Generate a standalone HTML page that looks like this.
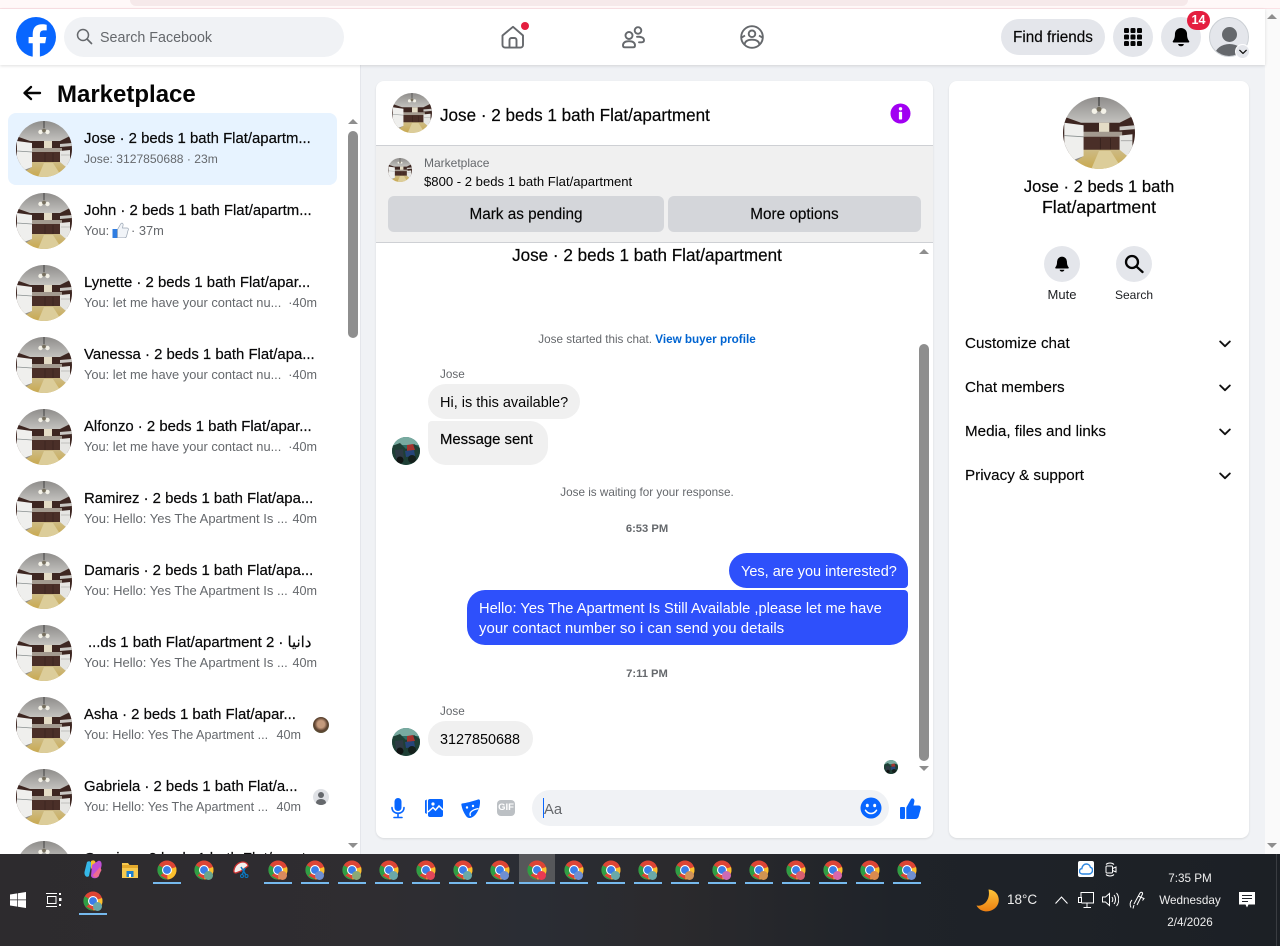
<!DOCTYPE html>
<html lang="en"><head><meta charset="utf-8"><title>Marketplace</title>
<style>
*{box-sizing:border-box}
html,body{margin:0;padding:0;width:1280px;height:946px;overflow:hidden;background:#f0f2f5;font-family:"Liberation Sans","Noto Sans CJK SC",sans-serif;color:#050505}
.a,.t,svg.i{position:absolute}
.t{white-space:nowrap;line-height:20px;margin-top:1px}
.n{font-size:14.9px;left:84px;color:#080809;-webkit-text-stroke:.2px #080809}
.s{font-size:12.85px;left:84px;color:#65686c}
.tm{font-size:12.6px;color:#65686c;text-align:right;right:963px}
.c{transform:translateX(-50%)}
.sys{font-size:11.7px;color:#65686c}
.b{position:absolute;background:#f0f0f0;border-radius:18px}
.m{font-size:14.5px}
.rw{font-size:15.2px;left:965px;-webkit-text-stroke:.15px #080809}
.ar{position:absolute;width:0;height:0;border-left:5px solid transparent;border-right:5px solid transparent}
.up{border-bottom:5px solid #8e8e8e}.dn{border-top:5px solid #8e8e8e}
.u{position:absolute;top:882px;height:2px;width:28px;background:#76b9ed}
.ct{position:absolute;top:860px;width:20px;height:20px}
.d{position:absolute;top:871px;width:9px;height:9px;border-radius:50%}
.tb{color:#eee;font-size:11.7px;line-height:16px;margin-top:1px}
.btn{position:absolute;top:196px;height:36px;background:#d4d6da;border-radius:6px;text-align:center;font-size:15.3px;line-height:37px;-webkit-text-stroke:.15px #050505}
</style></head><body>
<svg width="0" height="0" style="position:absolute">
<defs>
<clipPath id="cc"><circle cx="28" cy="28" r="28"/></clipPath>
<clipPath id="cj"><circle cx="14" cy="14" r="14"/></clipPath>
<linearGradient id="ceil" x1="0" y1="0" x2="0" y2="1"><stop offset="0" stop-color="#8f8d8b"/><stop offset=".6" stop-color="#b4b3b0"/><stop offset="1" stop-color="#cfcdc9"/></linearGradient>
<linearGradient id="flr" x1="0" y1="0" x2="0" y2="1"><stop offset="0" stop-color="#cdbb85"/><stop offset="1" stop-color="#c9a94f"/></linearGradient>
<symbol id="k" viewBox="0 0 56 56"><g clip-path="url(#cc)">
<rect width="56" height="24" fill="url(#ceil)"/>
<path d="M0 15L14 20H44L56 14V44H0Z" fill="#3d2621"/>
<rect x="28" y="20" width="8" height="8" fill="#e4dcc6"/>
<path d="M14 27H46V31H14Z" fill="#a39a8f"/>
<path d="M15 31H45V41H15Z" fill="#4a2f28"/>
<path d="M29 32V41M37 32V41" stroke="#2f1c18" stroke-width=".5"/>
<path d="M0 44L16 41H45L56 50V56H0Z" fill="url(#flr)"/>
<path d="M22 56L28 42H37L46 56Z" fill="#dccd9a"/>
<path d="M0 44L16 46L5 53L0 50Z" fill="#8f8d8b"/>
<path d="M1 20L16 22V46L8 49L1 45Z" fill="#efefed"/>
<path d="M1 30L16 31" stroke="#8a9090" stroke-width=".7"/>
<path d="M44 30L54 29V47L50 46L44 41Z" fill="#e6e6e3"/>
<path d="M45 34H54" stroke="#9a9a98" stroke-width=".6"/>
<path d="M44 23L56 22V25L44 26Z" fill="#c9c7c3"/>
<path d="M28 0V7" stroke="#3a3a3a" stroke-width=".9"/>
<circle cx="24.500" cy="11" r="2.200" fill="#f4f2e8"/><circle cx="31.500" cy="11" r="2.200" fill="#f4f2e8"/><circle cx="28" cy="9.500" r="1.900" fill="#77705f"/>
</g></symbol>
<symbol id="j" viewBox="0 0 28 28"><g clip-path="url(#cj)">
<rect width="28" height="28" fill="#2e6c63"/>
<rect width="28" height="8" fill="#78aaa0"/>
<path d="M0 9L8 6L14 12L22 7L28 11V28H0Z" fill="#1e3f35"/>
<path d="M15 8L21 7L23 13L15 14Z" fill="#a4332e"/>
<path d="M13 14L22 13L23 19L14 20Z" fill="#26457a"/>
<path d="M3 13L11 12L12 22L4 22Z" fill="#2e3a44"/>
<circle cx="8" cy="23" r="3.500" fill="#101413"/><circle cx="20" cy="22" r="4" fill="#14201c"/>
</g></symbol>
<symbol id="ch" viewBox="0 0 20 20">
<circle cx="10" cy="10" r="9.500" fill="#dd4535"/>
<path d="M10 10L3.400 15.500L10.500 19.500A9.500 9.500 0 0 1 1.700 5.300Z" fill="#2f9e44"/>
<path d="M10 10L19 7A9.500 9.500 0 0 1 10.500 19.500Z" fill="#fbc02d"/>
<circle cx="10" cy="10" r="5" fill="#fff"/><circle cx="10" cy="10" r="3.900" fill="#3b7de8"/>
</symbol>
<symbol id="bell" viewBox="0 0 24 24"><path d="M12 2.200a6.600 6.600 0 0 0-6.600 6.600c0 3.800-.8 5.800-2.200 7.500-.6.800-.1 1.700.8 1.700h16c.9 0 1.400-.9.800-1.700-1.400-1.700-2.200-3.700-2.200-7.500A6.600 6.600 0 0 0 12 2.200z" fill="#000"/><path d="M8.800 19.600a3.300 3.300 0 0 0 6.400 0z" fill="#000"/></symbol>
<symbol id="chev" viewBox="0 0 12 8"><path d="M1.200 1.500L6 6.200L10.800 1.500" fill="none" stroke="#111" stroke-width="1.900" stroke-linecap="round" stroke-linejoin="round"/></symbol>
</defs></svg>

<!-- top strip -->
<div class="a" style="left:0;top:0;width:1280px;height:9px;background:#fff8f8;border-bottom:1px solid #fbe1e5"></div>
<div class="a" style="left:130px;top:0;width:1058px;height:6px;background:#f6e9ea;border-radius:0 0 8px 8px"></div>
<!-- page scrollbar -->
<div class="a" style="left:1265px;top:9px;width:15px;height:845px;background:#fafafa"></div>
<div class="ar up" style="left:1267px;top:14px"></div>
<div class="ar dn" style="left:1267px;top:843px"></div>

<!-- sidebar -->
<div class="a" style="left:0;top:65px;width:361px;height:789px;background:#fff;border-right:1px solid #e4e6eb"></div>
<!-- nav -->
<div class="a" style="left:0;top:9px;width:1265px;height:56px;background:#fff;box-shadow:0 1px 3px rgba(0,0,0,.13)"></div>
<svg class="i" style="left:16px;top:17px" width="40" height="40" viewBox="0 0 40 40"><circle cx="20" cy="20" r="20" fill="#0866ff"/><path d="M16.700 40V26.200H12.600V20h4.100v-2.700c0-6.800 3.100-10 9.700-10 1.300 0 3.400.3 4.300.5v5.600c-.5-.05-1.300-.08-2.300-.08-3.200 0-4.500 1.200-4.500 4.400V20h6.400l-1.100 6.200h-5.300V40z" fill="#fff"/></svg>
<div class="a" style="left:64px;top:17px;width:280px;height:40px;background:#f0f2f5;border-radius:20px"></div>
<svg class="i" style="left:76px;top:28px" width="17" height="17" viewBox="0 0 17 17"><circle cx="7" cy="7" r="5.500" fill="none" stroke="#65686c" stroke-width="1.500"/><path d="M11 11L15.500 15.500" stroke="#65686c" stroke-width="1.700" stroke-linecap="round"/></svg>
<div class="t" style="left:100px;top:27px;font-size:14.300px;color:#65686c">Search Facebook</div>

<svg class="i" style="left:501px;top:25px" width="24" height="24" viewBox="0 0 24 24" fill="none" stroke="#65686c" stroke-width="1.900" stroke-linejoin="round"><path d="M1.500 10.500L12 1.800L22 10.500V20a2.600 2.600 0 0 1-2.600 2.600H4.100A2.600 2.600 0 0 1 1.500 20Z"/><path d="M8.500 22.500V15a2 2 0 0 1 2-2h3a2 2 0 0 1 2 2v7.500"/></svg>
<div class="a" style="left:521px;top:22px;width:8px;height:8px;border-radius:50%;background:#e41e3f"></div>
<svg class="i" style="left:621px;top:25px" width="24" height="24" viewBox="0 0 24 24" fill="none" stroke="#65686c" stroke-width="1.900" stroke-linecap="round"><circle cx="17" cy="5.500" r="3.300"/><circle cx="8" cy="10.500" r="3.500"/><path d="M2 20.500c0-3 2-4.300 6-4.300s6 1.300 6 4.300c0 1.200-.8 1.800-1.800 1.800H3.800C2.800 22.300 2 21.700 2 20.500Z"/><path d="M16 11.800c3.500-.3 7 .6 7 3.500 0 1.500-1 2-2.500 2H18"/></svg>
<svg class="i" style="left:740px;top:25px" width="24" height="24" viewBox="0 0 24 24" fill="none" stroke="#65686c" stroke-width="1.900"><circle cx="12" cy="12" r="10.800"/><circle cx="12" cy="8.800" r="3.300"/><path d="M4.500 20c.3-3.500 3-5.300 7.500-5.300s7.200 1.800 7.500 5.300"/><path d="M1.800 12.500L5 10.500M22.200 12.500L19 10.500"/></svg>

<div class="a" style="left:1001px;top:19px;width:104px;height:36px;border-radius:18px;background:#e4e6eb"></div>
<div class="t" style="left:1013px;top:27px;font-size:15.300px;-webkit-text-stroke:.15px #050505">Find friends</div>
<div class="a" style="left:1113px;top:17px;width:40px;height:40px;border-radius:50%;background:#e4e6eb"></div>
<svg class="i" style="left:1123px;top:27px" width="20" height="20" viewBox="0 0 20 20" fill="#050505"><rect x="1" y="1" width="5" height="5" rx="1.300"/><rect x="7.500" y="1" width="5" height="5" rx="1.300"/><rect x="14" y="1" width="5" height="5" rx="1.300"/><rect x="1" y="7.500" width="5" height="5" rx="1.300"/><rect x="7.500" y="7.500" width="5" height="5" rx="1.300"/><rect x="14" y="7.500" width="5" height="5" rx="1.300"/><rect x="1" y="14" width="5" height="5" rx="1.300"/><rect x="7.500" y="14" width="5" height="5" rx="1.300"/><rect x="14" y="14" width="5" height="5" rx="1.300"/></svg>
<div class="a" style="left:1161px;top:17px;width:40px;height:40px;border-radius:50%;background:#e4e6eb"></div>
<svg class="i" style="left:1170px;top:26px" width="22" height="22"><use href="#bell"/></svg>
<div class="a" style="left:1187px;top:11px;width:23px;height:19px;border-radius:10px;background:#e41e3f;color:#fff;font-size:12.500px;font-weight:700;text-align:center;line-height:19px">14</div>
<div class="a" style="left:1209px;top:17px;width:40px;height:40px;border-radius:50%;background:#e4e6eb;overflow:hidden;border:1px solid #ccd0d5"><div class="a" style="left:12px;top:9px;width:15px;height:15px;border-radius:50%;background:#65686c"></div><div class="a" style="left:5px;top:26px;width:29px;height:22px;border-radius:50%;background:#65686c"></div></div>
<div class="a" style="left:1235px;top:44px;width:15px;height:15px;border-radius:50%;background:#e4e6eb;border:1px solid #fff"></div>
<svg class="i" style="left:1239px;top:49px" width="8" height="6"><use href="#chev"/></svg>

<!-- sidebar content -->
<svg class="i" style="left:22px;top:84px" width="20" height="18" viewBox="0 0 20 18" fill="none" stroke="#050505" stroke-width="2.400" stroke-linecap="round" stroke-linejoin="round"><path d="M18 9H3M9 3L2.500 9L9 15"/></svg>
<div class="t" style="left:57px;top:81px;font-size:24px;line-height:26px;font-weight:700">Marketplace</div>
<div class="a" style="left:8px;top:113px;width:329px;height:72px;background:#e7f3ff;border-radius:8px"></div>
<div class="ar up" style="left:348px;top:119px"></div>
<div class="a" style="left:348px;top:131px;width:10px;height:207px;background:#8e8e8e;border-radius:5px"></div>
<div class="ar dn" style="left:348px;top:843px"></div>

<svg class="i" style="left:16px;top:121px" width="56" height="56"><use href="#k"/></svg>
<div class="t n" style="top:128px">Jose · 2 beds 1 bath Flat/apartm...</div>
<div class="t s" style="top:148px;font-size:12.100px">Jose: 3127850688 · 23m</div>

<svg class="i" style="left:16px;top:193px" width="56" height="56"><use href="#k"/></svg>
<div class="t n" style="top:200px">John · 2 beds 1 bath Flat/apartm...</div>
<div class="t s" style="top:220px">You:</div>
<svg class="i" style="left:112px;top:222px" width="17" height="16" viewBox="0 0 17 16"><rect x=".5" y="7" width="5" height="9" fill="#2f7de1"/><path d="M5.500 7.500L9 1.500c1.500-1 2.500.5 2 2L10.500 6H15c1.500 0 1.800 1.500 1 2.500L14.500 14.500c-.3 1-1 1.300-2 1.300H5.500Z" fill="#f1f4f8" stroke="#9aa5b3" stroke-width=".7"/></svg>
<div class="t s" style="top:220px;left:131px">· 37m</div>

<svg class="i" style="left:16px;top:265px" width="56" height="56"><use href="#k"/></svg>
<div class="t n" style="top:272px">Lynette · 2 beds 1 bath Flat/apar...</div>
<div class="t s" style="top:292px">You: let me have your contact nu...</div><div class="t tm" style="top:292px">·40m</div>

<svg class="i" style="left:16px;top:337px" width="56" height="56"><use href="#k"/></svg>
<div class="t n" style="top:344px">Vanessa · 2 beds 1 bath Flat/apa...</div>
<div class="t s" style="top:364px">You: let me have your contact nu...</div><div class="t tm" style="top:364px">·40m</div>

<svg class="i" style="left:16px;top:409px" width="56" height="56"><use href="#k"/></svg>
<div class="t n" style="top:416px">Alfonzo · 2 beds 1 bath Flat/apar...</div>
<div class="t s" style="top:436px">You: let me have your contact nu...</div><div class="t tm" style="top:436px">·40m</div>

<svg class="i" style="left:16px;top:481px" width="56" height="56"><use href="#k"/></svg>
<div class="t n" style="top:488px">Ramirez · 2 beds 1 bath Flat/apa...</div>
<div class="t s" style="top:508px;font-size:13px">You: Hello: Yes The Apartment Is ...</div><div class="t tm" style="top:508px">40m</div>

<svg class="i" style="left:16px;top:553px" width="56" height="56"><use href="#k"/></svg>
<div class="t n" style="top:560px">Damaris · 2 beds 1 bath Flat/apa...</div>
<div class="t s" style="top:580px;font-size:13px">You: Hello: Yes The Apartment Is ...</div><div class="t tm" style="top:580px">40m</div>

<svg class="i" style="left:16px;top:625px" width="56" height="56"><use href="#k"/></svg>
<div class="t n" style="top:632px;left:88px">...ds 1 bath Flat/apartment 2 · دانيا</div>
<div class="t s" style="top:652px;font-size:13px">You: Hello: Yes The Apartment Is ...</div><div class="t tm" style="top:652px">40m</div>

<svg class="i" style="left:16px;top:697px" width="56" height="56"><use href="#k"/></svg>
<div class="t n" style="top:704px">Asha · 2 beds 1 bath Flat/apar...</div>
<div class="t s" style="top:724px;font-size:12.600px">You: Hello: Yes The Apartment ...</div><div class="t tm" style="top:724px;right:979px">40m</div>
<div class="a" style="left:313px;top:717px;width:16px;height:16px;border-radius:50%;background:radial-gradient(circle at 50% 45%,#c49a7c 0 30%,#5d4230 55%,#55633f 100%)"></div>

<svg class="i" style="left:16px;top:769px" width="56" height="56"><use href="#k"/></svg>
<div class="t n" style="top:776px">Gabriela · 2 beds 1 bath Flat/a...</div>
<div class="t s" style="top:796px;font-size:12.600px">You: Hello: Yes The Apartment ...</div><div class="t tm" style="top:796px;right:979px">40m</div>
<div class="a" style="left:313px;top:789px;width:16px;height:16px;border-radius:50%;background:#dfe1e5;overflow:hidden"><div class="a" style="left:5px;top:3px;width:6px;height:6px;border-radius:50%;background:#65686c"></div><div class="a" style="left:3px;top:10px;width:10px;height:7px;border-radius:50%;background:#65686c"></div></div>

<svg class="i" style="left:16px;top:841px" width="56" height="56"><use href="#k"/></svg>
<div class="t n" style="top:848px">Gracias · 2 beds 1 bath Flat/apart</div>

<!-- middle panel -->
<div class="a" style="left:376px;top:81px;width:557px;height:757px;background:#fff;border-radius:8px;box-shadow:0 1px 2px rgba(0,0,0,.1)"></div>
<svg class="i" style="left:392px;top:93px" width="40" height="40"><use href="#k"/></svg>
<div class="t" style="left:440px;top:105px;font-size:17.100px;-webkit-text-stroke:.2px #050505">Jose · 2 beds 1 bath Flat/apartment</div>
<svg class="i" style="left:890px;top:103px" width="21" height="21" viewBox="0 0 21 21"><circle cx="10.500" cy="10.500" r="10" fill="#a100f2"/><circle cx="10.500" cy="5.800" r="1.700" fill="#fff"/><rect x="8.900" y="8.800" width="3.200" height="7.700" rx=".8" fill="#fff"/></svg>
<div class="a" style="left:376px;top:145px;width:557px;height:98px;background:#f0f0f0;border-top:1px solid #ced0d4;border-bottom:1px solid #ced0d4"></div>
<svg class="i" style="left:388px;top:158px" width="24" height="24"><use href="#k"/></svg>
<div class="t" style="left:424px;top:153px;font-size:12px;color:#65686c;margin-top:0">Marketplace</div>
<div class="t" style="left:424px;top:172px;font-size:13.100px;margin-top:0">$800 - 2 beds 1 bath Flat/apartment</div>
<div class="btn" style="left:388px;width:276px">Mark as pending</div>
<div class="btn" style="left:668px;width:253px">More options</div>

<div class="ar up" style="left:919px;top:249px"></div>
<div class="a" style="left:919px;top:344px;width:10px;height:417px;background:#8e8e8e;border-radius:5px"></div>
<div class="ar dn" style="left:919px;top:766px"></div>

<div class="t c" style="left:647px;top:245px;font-size:17.100px;-webkit-text-stroke:.2px #050505">Jose · 2 beds 1 bath Flat/apartment</div>
<div class="t c sys" style="left:647px;top:329px">Jose started this chat. <b style="color:#0064d1">View buyer profile</b></div>
<div class="t sys" style="left:440px;top:364px">Jose</div>
<div class="b" style="left:428px;top:384px;width:152px;height:35px"></div>
<div class="t m" style="left:440px;top:392px">Hi, is this available?</div>
<div class="b" style="left:428px;top:421px;width:120px;height:44px;border-top-left-radius:4px"></div>
<div class="t m" style="left:440px;top:429px;font-size:14.900px;-webkit-text-stroke:.2px #050505">Message sent</div>
<svg class="i" style="left:392px;top:437px" width="28" height="28"><use href="#j"/></svg>
<div class="t c sys" style="left:647px;top:482px">Jose is waiting for your response.</div>
<div class="t c sys" style="left:647px;top:518px;font-weight:700;font-size:11.200px">6:53 PM</div>
<div class="b" style="left:729px;top:553px;width:179px;height:35px;background:#2e50fb;border-bottom-right-radius:4px"></div>
<div class="t m" style="left:741px;top:561px;color:#fff">Yes, are you interested?</div>
<div class="b" style="left:467px;top:590px;width:441px;height:55px;background:#2e50fb;border-top-right-radius:4px"></div>
<div class="t m" style="left:479px;top:598px;color:#fff;font-size:14.700px">Hello: Yes The Apartment Is Still Available ,please let me have</div>
<div class="t m" style="left:479px;top:618px;color:#fff;font-size:15px">your contact number so i can send you details</div>
<div class="t c sys" style="left:647px;top:663px;font-weight:700;font-size:11.200px">7:11 PM</div>
<div class="t sys" style="left:440px;top:701px">Jose</div>
<div class="b" style="left:428px;top:721px;width:105px;height:35px"></div>
<div class="t m" style="left:440px;top:729px;font-size:14.400px">3127850688</div>
<svg class="i" style="left:392px;top:728px" width="28" height="28"><use href="#j"/></svg>
<svg class="i" style="left:884px;top:760px" width="14" height="14"><use href="#j"/></svg>

<!-- composer -->
<svg class="i" style="left:390px;top:798px" width="16" height="21" viewBox="0 0 16 21" fill="#0866ff"><rect x="4.500" y="0" width="7" height="13" rx="3.500"/><path d="M2 9.500c0 3.500 2.500 5.800 6 5.800s6-2.300 6-5.800" fill="none" stroke="#0866ff" stroke-width="1.600" stroke-linecap="round"/><path d="M8 15v3.500M4 19.500h8" stroke="#0866ff" stroke-width="1.600" stroke-linecap="round"/></svg>
<svg class="i" style="left:425px;top:798px" width="18" height="20" viewBox="0 0 18 20"><path d="M0 2.500L1.800 1.500V16L0 15Z" fill="#0866ff"/><rect x="3" y="1" width="15" height="18" rx="2" fill="#0866ff"/><circle cx="8" cy="6" r="1.600" fill="#fff"/><path d="M3 14L8 9.500L10.500 12L14 8L18 12" fill="none" stroke="#fff" stroke-width="1.500"/></svg>
<svg class="i" style="left:461px;top:799px" width="19" height="19" viewBox="0 0 19 19"><path d="M1 4.500C5 4 11 2.500 17 .5c1.500-.3 2 .5 2 1.500.2 4-.8 8-3 11.500-1.500 2.500-4 5-7 5.500-1.500.2-3-.6-4-2C2.500 13.500 1 9.500.4 6c-.1-.8 0-1.300.6-1.500Z" fill="#0866ff"/><circle cx="6" cy="8.500" r="1.200" fill="#fff"/><circle cx="12" cy="7" r="1.200" fill="#fff"/><path d="M9.500 17c-1.500-3 .5-6 8-7.500" fill="none" stroke="#fff" stroke-width="1.300"/></svg>
<div class="a" style="left:497px;top:800px;width:18px;height:16px;border-radius:4px;background:#bcc0c4;color:#fff;font-size:9.500px;font-weight:700;text-align:center;line-height:16px">GIF</div>
<div class="a" style="left:532px;top:790px;width:357px;height:36px;border-radius:18px;background:#f0f2f5"></div>
<div class="a" style="left:543px;top:798px;width:1px;height:20px;background:#0866ff"></div>
<div class="t" style="left:544px;top:799px;font-size:14.800px;color:#65686c">Aa</div>
<svg class="i" style="left:860px;top:797px" width="22" height="22" viewBox="0 0 22 22"><circle cx="11" cy="11" r="10.500" fill="#0866ff"/><ellipse cx="7.300" cy="8.500" rx="1.500" ry="1.800" fill="#fff"/><ellipse cx="14.700" cy="8.500" rx="1.500" ry="1.800" fill="#fff"/><path d="M5.500 13.300c1.500 2.300 3.200 3.200 5.500 3.200s4-.9 5.500-3.200" fill="none" stroke="#fff" stroke-width="1.500" stroke-linecap="round"/></svg>
<svg class="i" style="left:900px;top:798px" width="21" height="21" viewBox="0 0 21 21" fill="#0866ff"><rect x="0" y="9" width="5" height="12" rx="1"/><path d="M6.300 9.500L10.500 2c.5-1.500 1.500-2 2.500-1.500 1.300.6 1.700 2 1.300 3.500L13.500 7.500H18.500c1.700 0 2.800 1.300 2.300 3L18.800 18c-.5 2-1.700 3-3.500 3H6.300Z"/></svg>

<!-- right panel -->
<div class="a" style="left:949px;top:81px;width:300px;height:757px;background:#fff;border-radius:8px;box-shadow:0 1px 2px rgba(0,0,0,.1)"></div>
<svg class="i" style="left:1063px;top:97px" width="72" height="72"><use href="#k"/></svg>
<div class="t c" style="left:1099px;top:176px;font-size:16.600px;-webkit-text-stroke:.2px #050505">Jose · 2 beds 1 bath</div>
<div class="t c" style="left:1099px;top:196px;font-size:17.700px;-webkit-text-stroke:.2px #050505">Flat/apartment</div>
<div class="a" style="left:1044px;top:246px;width:36px;height:36px;border-radius:50%;background:#e4e6eb"></div>
<svg class="i" style="left:1053px;top:254px" width="18" height="20"><use href="#bell"/></svg>
<div class="a" style="left:1116px;top:246px;width:36px;height:36px;border-radius:50%;background:#e4e6eb"></div>
<svg class="i" style="left:1124px;top:254px" width="20" height="20" viewBox="0 0 20 20" fill="none" stroke="#050505" stroke-width="2.300" stroke-linecap="round"><circle cx="8" cy="8" r="6"/><path d="M12.800 12.800L18.500 18"/></svg>
<div class="t c" style="left:1062px;top:284px;font-size:13px;color:#1c1e21">Mute</div>
<div class="t c" style="left:1134px;top:284px;font-size:12px;color:#1c1e21">Search</div>
<div class="t rw" style="top:333px">Customize chat</div>
<div class="t rw" style="top:377px">Chat members</div>
<div class="t rw" style="top:421px">Media, files and links</div>
<div class="t rw" style="top:465px">Privacy &amp; support</div>
<svg class="i" style="left:1219px;top:340px" width="12" height="8"><use href="#chev"/></svg>
<svg class="i" style="left:1219px;top:384px" width="12" height="8"><use href="#chev"/></svg>
<svg class="i" style="left:1219px;top:428px" width="12" height="8"><use href="#chev"/></svg>
<svg class="i" style="left:1219px;top:472px" width="12" height="8"><use href="#chev"/></svg>

<!-- taskbar -->
<div class="a" style="left:0;top:854px;width:1280px;height:92px;background:linear-gradient(90deg,#2d2b2e 0%,#2f2d31 30%,#2a2d34 42%,#2b2a2d 52%,#1f2329 70%,#1c2025 100%)"></div>
<div class="a" style="left:519px;top:854px;width:36px;height:30px;background:#56575a"></div>

<svg class="i" style="left:84px;top:860px" width="18" height="19" viewBox="0 0 18 19"><path d="M3 2C6 0 8 2 7 6L5 16C3 18 0 16 .5 12Z" fill="#35b8e8"/><path d="M7 1C10-.5 12 1 11.500 4L7 9Z" fill="#f3c02c"/><path d="M8 5L14 1c3-1 4 2 3.500 5L15 16c-2 3-7 3-8 0Z" fill="#c04fd6"/><path d="M9 15L16 7l1.500 3-3 6c-1.500 2.500-5 2-5.500-1Z" fill="#ef6c8f"/></svg>
<svg class="i" style="left:122px;top:862px" width="16" height="16" viewBox="0 0 16 16"><path d="M0 1H6L7.500 3H16V16H0Z" fill="#f6c94e"/><rect x="0" y="3" width="16" height="3" fill="#e3a92b"/><rect x="4.500" y="9" width="7" height="6" fill="#1b7fd0"/><rect x="7" y="12" width="2" height="3" fill="#fff"/></svg>

<svg class="ct" style="left:157px"><use href="#ch"/></svg>
<svg class="ct" style="left:194px"><use href="#ch"/></svg><div class="d" style="left:204px;background:#6aa58e"></div>
<svg class="i" style="left:233px;top:861px" width="17" height="17" viewBox="0 0 17 17"><path d="M1 9C2 4 6 1 10 1c3 0 5 2 5 4L8 10 3 12C1 12 .5 10.500 1 9Z" fill="#f2f0ee" stroke="#c33" stroke-width="1.300"/><path d="M8 6L13 14" stroke="#0a78c2" stroke-width="1.500"/><path d="M12 7L9 14" stroke="#0a78c2" stroke-width="1.500"/><circle cx="9" cy="15" r="1.500" fill="none" stroke="#0a78c2"/><circle cx="13.500" cy="15" r="1.500" fill="none" stroke="#0a78c2"/></svg>
<svg class="ct" style="left:268px"><use href="#ch"/></svg><div class="d" style="left:278px;background:#d98a5e"></div>
<svg class="ct" style="left:305px"><use href="#ch"/></svg><div class="d" style="left:315px;background:#6f8fd1"></div>
<svg class="ct" style="left:342px"><use href="#ch"/></svg><div class="d" style="left:352px;background:#8aa878"></div>
<svg class="ct" style="left:379px"><use href="#ch"/></svg><div class="d" style="left:389px;background:#6aa8a8"></div>
<svg class="ct" style="left:416px"><use href="#ch"/></svg><div class="d" style="left:426px;background:#e2475a"></div>
<svg class="ct" style="left:453px"><use href="#ch"/></svg><div class="d" style="left:463px;background:#6aa8a8"></div>
<svg class="ct" style="left:490px"><use href="#ch"/></svg><div class="d" style="left:500px;background:#6f8fd1"></div>
<svg class="ct" style="left:527px"><use href="#ch"/></svg><div class="d" style="left:537px;background:#e83a52"></div>
<svg class="ct" style="left:564px"><use href="#ch"/></svg><div class="d" style="left:574px;background:#6f8fd1"></div>
<svg class="ct" style="left:601px"><use href="#ch"/></svg><div class="d" style="left:611px;background:#6aa8a8"></div>
<svg class="ct" style="left:638px"><use href="#ch"/></svg><div class="d" style="left:648px;background:#6aa8a8"></div>
<svg class="ct" style="left:675px"><use href="#ch"/></svg><div class="d" style="left:685px;background:#d0935a"></div>
<svg class="ct" style="left:712px"><use href="#ch"/></svg><div class="d" style="left:722px;background:#cc6bb4"></div>
<svg class="ct" style="left:749px"><use href="#ch"/></svg><div class="d" style="left:759px;background:#cf9352"></div>
<svg class="ct" style="left:786px"><use href="#ch"/></svg><div class="d" style="left:796px;background:#d95f70"></div>
<svg class="ct" style="left:823px"><use href="#ch"/></svg><div class="d" style="left:833px;background:#d868ac"></div>
<svg class="ct" style="left:860px"><use href="#ch"/></svg><div class="d" style="left:870px;background:#d98a50"></div>
<svg class="ct" style="left:897px"><use href="#ch"/></svg><div class="d" style="left:907px;background:#6f8fd1"></div>

<div class="u" style="left:153px"></div><div class="u" style="left:264px"></div><div class="u" style="left:301px"></div><div class="u" style="left:338px"></div><div class="u" style="left:375px"></div><div class="u" style="left:412px"></div><div class="u" style="left:449px"></div><div class="u" style="left:486px"></div><div class="u" style="left:519px;width:36px"></div><div class="u" style="left:560px"></div><div class="u" style="left:597px"></div><div class="u" style="left:634px"></div><div class="u" style="left:671px"></div><div class="u" style="left:708px"></div><div class="u" style="left:745px"></div><div class="u" style="left:782px"></div><div class="u" style="left:819px"></div><div class="u" style="left:856px"></div><div class="u" style="left:893px"></div>

<svg class="i" style="left:10px;top:892px" width="16" height="16" viewBox="0 0 16 16" fill="#fff"><path d="M0 2.500L7.300 1.400V7.500H0ZM8 1.300L16 0V7.500H8ZM0 8.300H7.300V14.600L0 13.500ZM8 8.300H16V16L8 14.700Z"/></svg>
<svg class="i" style="left:46px;top:892px" width="16" height="16" viewBox="0 0 16 16" fill="none" stroke="#fff" stroke-width="1"><path d="M0 1.500H11M0 14.500H11M1.500 4.500H10V11.500H1.500Z"/><rect x="13" y="1" width="2" height="2" fill="#fff" stroke="none"/><rect x="13" y="6" width="2.500" height="3" fill="#fff" stroke="none"/><rect x="13" y="12" width="2" height="2" fill="#fff" stroke="none"/></svg>
<svg class="ct" style="left:83px;top:891px"><use href="#ch"/></svg><div class="d" style="left:93px;top:902px;background:#6aa8a8"></div>
<div class="u" style="left:79px;top:913px"></div>

<!-- tray -->
<div class="a" style="left:1078px;top:861px;width:16px;height:16px;background:#fff;border-radius:2px"></div>
<svg class="i" style="left:1079px;top:863px" width="14" height="12" viewBox="0 0 14 12" fill="none" stroke="#2b86e0" stroke-width="1.400"><path d="M3.500 11C1.500 11 .5 9.700 .5 8.300c0-1.500 1-2.500 2.300-2.600C3 3 5 1 7.300 1c2 0 3.700 1.300 4.100 3.300 1.200.3 2.100 1.400 2.100 2.900 0 2-1.400 3.800-3.500 3.800Z"/></svg>
<svg class="i" style="left:1105px;top:862px" width="12" height="15" viewBox="0 0 12 15" fill="none" stroke="#fff"><path d="M1 2.500C3 .5 7 .5 9 2.500M1 12.500C3 14.500 7 14.500 9 12.500"/><rect x="1" y="4" width="6.500" height="7" rx="1"/><path d="M7.500 6.500L11 5V10L7.500 8.500"/></svg>
<svg class="i" style="left:976px;top:889px" width="23" height="23" viewBox="0 0 23 23"><defs><linearGradient id="mo" x1="0" y1="0" x2="0" y2="1"><stop offset="0" stop-color="#ffc53a"/><stop offset="1" stop-color="#ec7f12"/></linearGradient></defs><path d="M12.500 0.500C21 1 24.500 9 22 15c-2.500 6-10 9-16 6.500C3.500 20.500 1.500 18.500.5 16.500 8 18 14.800 10.500 12.500.5Z" fill="url(#mo)"/></svg>
<div class="t tb" style="left:1007px;top:891px;font-size:13.500px">18°C</div>
<svg class="i" style="left:1055px;top:896px" width="13" height="8" viewBox="0 0 13 8" fill="none" stroke="#fff" stroke-width="1.100"><path d="M.5 7.500L6.500 1L12.500 7.500"/></svg>
<svg class="i" style="left:1078px;top:892px" width="16" height="16" viewBox="0 0 16 16" fill="none" stroke="#fff"><path d="M3 6V.5H15.500V11H3.500"/><rect x=".5" y="5.500" width="3" height="5"/><path d="M9 11V15M5.500 15.500H13"/></svg>
<svg class="i" style="left:1102px;top:892px" width="17" height="15" viewBox="0 0 17 15" fill="none" stroke="#fff"><path d="M.5 5H3.500L7.500 1.500V13.500L3.500 10H.5Z"/><path d="M10 5c1 1.500 1 3.500 0 5M12 3c2 2.500 2 6.500 0 9M14.500 1c3 3.500 3 9.500 0 13"/></svg>
<svg class="i" style="left:1129px;top:891px" width="17" height="18" viewBox="0 0 17 18" fill="none" stroke="#fff"><path d="M5 13L11 2c1-1.500 3-.5 2.500 1L8 14"/><path d="M9 5L15 7.500L13.500 9.500"/><path d="M3 9C1 11 .5 14 2 16.500M5 14L4 17.500"/></svg>
<div class="t tb c" style="left:1190px;top:870px">7:35 PM</div>
<div class="t tb c" style="left:1190px;top:892px">Wednesday</div>
<div class="t tb c" style="left:1190px;top:914px">2/4/2026</div>
<svg class="i" style="left:1239px;top:892px" width="16" height="16" viewBox="0 0 16 16"><path d="M0 0H16V12.500H9.500L8 15.500L6.500 12.500H0Z" fill="#fff"/><path d="M3 3.500H13M3 6.500H13M3 9.500H9" stroke="#1f2329" stroke-width="1"/></svg>
<div class="a" style="left:1276px;top:854px;width:1px;height:92px;background:#3a3d42"></div>
</body></html>
